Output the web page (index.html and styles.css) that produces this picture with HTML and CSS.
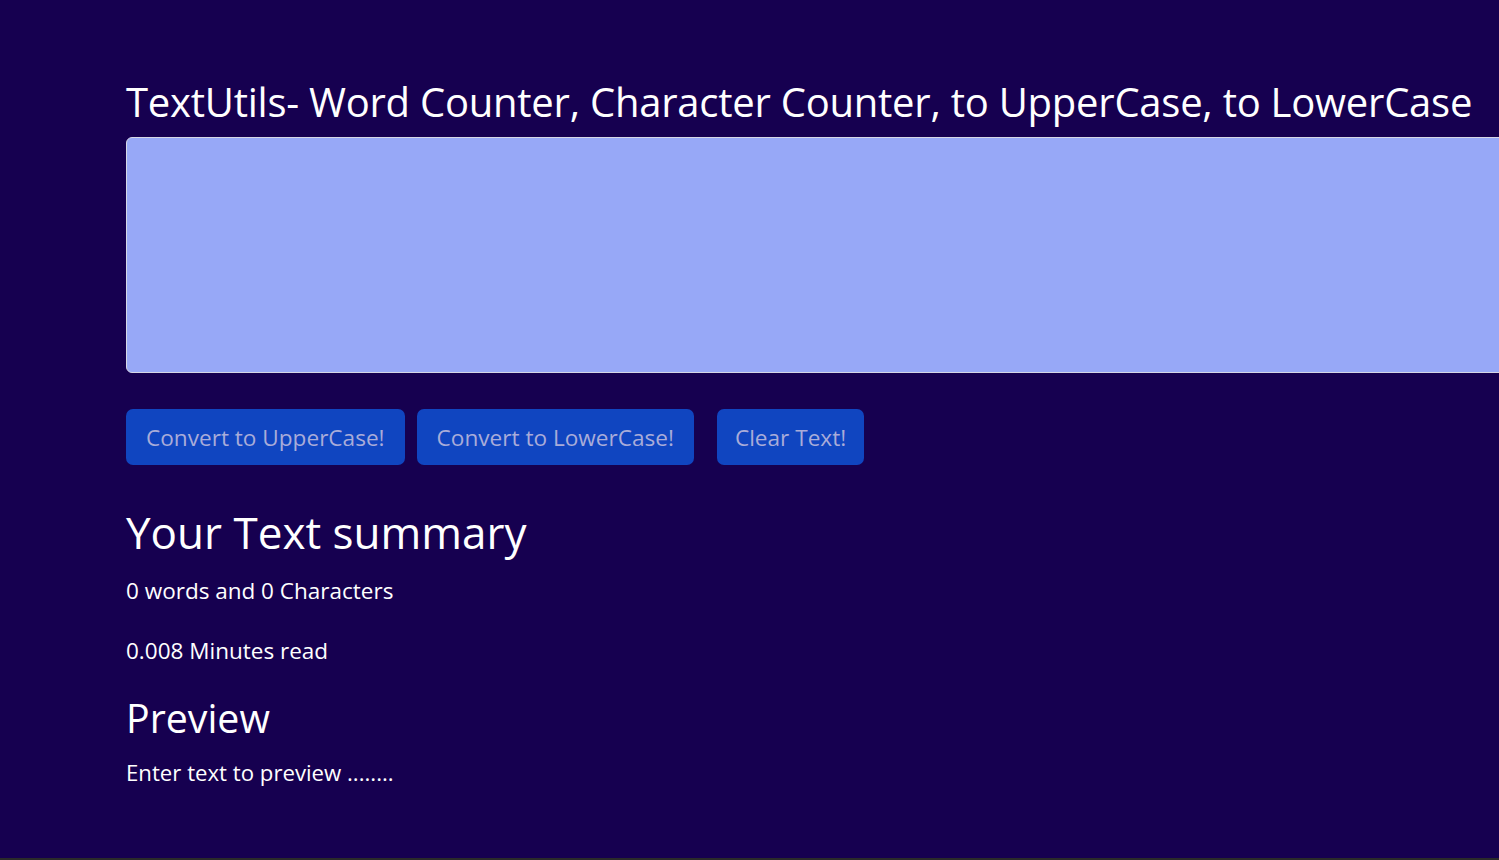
FILE: index.html
```html
<!DOCTYPE html>
<html lang="en">
<head>
<meta charset="utf-8">
<title>TextUtils</title>
<link rel="stylesheet" href="styles.css">
</head>
<body>
<main class="page">
  <section class="editor">
    <h1 class="title">TextUtils- Word Counter, Character Counter, to UpperCase, to LowerCase</h1>
    <textarea class="textbox" rows="8"></textarea>
    <div class="actions">
      <button class="btn">Convert to UpperCase!</button>
      <button class="btn">Convert to LowerCase!</button>
      <button class="btn btn-clear">Clear Text!</button>
    </div>
  </section>
  <section class="summary">
    <h2 class="summary-title">Your Text summary</h2>
    <p class="stat">0 words and 0 Characters</p>
    <p class="stat">0.008 Minutes read</p>
    <h2 class="preview-title">Preview</h2>
    <p class="preview">Enter text to preview ........</p>
  </section>
</main>
</body>
</html>
```

FILE: styles.css
```css
html, body {
  margin: 0;
  padding: 0;
}
body {
  background: #160050;
  color: #ffffff;
  font-family: "Open Sans", "Noto Sans", sans-serif;
  overflow: hidden;
  height: 860px;
  box-sizing: border-box;
  border-bottom: 2px solid #2a2a2a;
}
.page {
  padding: 78px 0 0 126px;
}
.title {
  margin: 0;
  font-size: 40px;
  font-weight: 400;
  letter-spacing: -0.24px;
  line-height: 1.2;
  white-space: nowrap;
}
.textbox {
  display: block;
  box-sizing: border-box;
  width: 1400px;
  height: 236px;
  margin-top: 11px;
  background: #97a8f7;
  border: 1px solid #d6d8e6;
  border-radius: 6px;
  resize: none;
}
.actions {
  display: flex;
  margin-top: 36px;
}
.btn {
  height: 56px;
  padding: 0 20px;
  background: #1045c0;
  color: #a9acd9;
  border: none;
  border-radius: 7px;
  font-family: inherit;
  font-size: 22.6px;
  margin-right: 12px;
}
.btn-clear {
  margin-left: 11px;
  padding: 0 18px;
}
.summary {
  margin-top: 40px;
}
.summary-title {
  margin: 0;
  font-size: 44px;
  font-weight: 400;
  line-height: 1.25;
}
.stat {
  margin: 14px 0 0;
  font-size: 22.5px;
  line-height: 1.5;
}
.stat + .stat {
  margin-top: 26px;
}
.preview-title {
  margin: 27px 0 0;
  font-size: 39.3px;
  font-weight: 400;
  line-height: 1.2;
}
.preview {
  margin: 14px 0 0;
  font-size: 22.2px;
  line-height: 1.5;
}
```
